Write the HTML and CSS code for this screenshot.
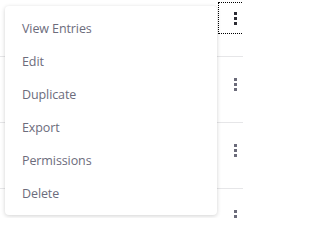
FILE: index.html
```html
<!DOCTYPE html>
<html>
<head>
<meta charset="utf-8">
<link rel="stylesheet" href="styles.css">
</head>
<body>
<div class="page">
  <div class="rows">
    <div class="row"><button class="kebab focused"><span></span><span></span><span></span></button></div>
    <div class="row"><button class="kebab"><span></span><span></span><span></span></button></div>
    <div class="row"><button class="kebab"><span></span><span></span><span></span></button></div>
    <div class="row"><button class="kebab"><span></span><span></span><span></span></button></div>
  </div>
  <ul class="menu">
    <li class="item">View Entries</li>
    <li class="item">Edit</li>
    <li class="item">Duplicate</li>
    <li class="item">Export</li>
    <li class="item">Permissions</li>
    <li class="item">Delete</li>
  </ul>
</div>
</body>
</html>
```
FILE: styles.css
```css
html, body {
  margin: 0;
  padding: 0;
  background: #fff;
  overflow: hidden;
}
.page {
  position: relative;
  width: 243px;
  height: 218px;
  overflow: hidden;
  font-family: "Open Sans", "Noto Sans", sans-serif;
}
.rows {
  margin-top: -9px;
  margin-right: -8px;
}
.row {
  height: 65px;
  border-bottom: 1px solid #e6e6e8;
  display: flex;
  justify-content: flex-end;
  align-items: flex-start;
  box-sizing: content-box;
}
.kebab {
  margin-top: 12px;
  width: 32px;
  height: 30px;
  padding: 0;
  border: none;
  background: transparent;
  display: flex;
  flex-direction: column;
  align-items: center;
  justify-content: center;
  gap: 2px;
}
.kebab span {
  width: 3px;
  height: 3px;
  background: #6b6b7a;
  display: block;
}
.kebab.focused {
  outline: 1px dotted #000;
  outline-offset: 0;
}
.kebab.focused span {
  background: #2b2b33;
}
.menu {
  position: absolute;
  left: 5px;
  top: 6px;
  width: 212px;
  height: 209px;
  box-sizing: border-box;
  margin: 0;
  padding: 6px 0 5px;
  list-style: none;
  background: #fff;
  border-radius: 4px;
  box-shadow: 0 1px 4px rgba(0, 0, 0, 0.18);
}
.item {
  height: 33px;
  display: flex;
  align-items: center;
  padding-left: 17px;
  font-size: 12.5px;
  letter-spacing: -0.1px;
  color: #6c6c7c;
}
```
